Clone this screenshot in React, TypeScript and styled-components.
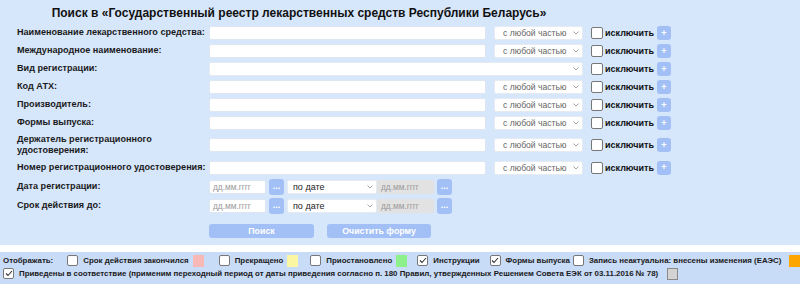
import React from "react";
import styled, { createGlobalStyle } from "styled-components";

const Global = createGlobalStyle`
  html, body { margin: 0; padding: 0; background: #ffffff; }
  body { font-family: "Liberation Sans", Arial, sans-serif; }
`;

const Page = styled.div`
  width: 800px;
  height: 284px;
  display: flex;
  flex-direction: column;
  background: #ffffff;
  overflow: hidden;
`;

const Panel = styled.div`
  height: 245px;
  background: #d6e6fb;
  display: flex;
  flex-direction: column;
  padding-left: 17px;
  box-sizing: border-box;
`;

const Title = styled.h1`
  margin: 0;
  width: 564px;
  height: 24px;
  line-height: 26px;
  font-size: 12px;
  font-weight: bold;
  text-align: center;
  color: #111;
`;

const Row = styled.div<{ $h?: number }>`
  display: flex;
  align-items: center;
  height: ${(p) => p.$h ?? 18}px;
`;

const Label = styled.div`
  width: 192px;
  flex: none;
  font-size: 9.1px;
  font-weight: bold;
  line-height: 11.5px;
  color: #1a1a1a;
`;

const TextInput = styled.div<{ $w: number; $disabled?: boolean; $h?: number }>`
  width: ${(p) => p.$w}px;
  height: ${(p) => p.$h ?? 14}px;
  box-sizing: border-box;
  background: ${(p) => (p.$disabled ? "#e2e2e2" : "#ffffff")};
  border: 1px solid ${(p) => (p.$disabled ? "#e2e2e2" : "#dfe6ef")};
  border-radius: 2px;
  font-size: 8.3px;
  color: #9a9a9a;
  padding-left: 3px;
  display: flex;
  align-items: center;
  flex: none;
`;

const Select = styled.div<{ $w: number; $h?: number; $dark?: boolean }>`
  width: ${(p) => p.$w}px;
  height: ${(p) => p.$h ?? 14}px;
  box-sizing: border-box;
  background: #ffffff;
  border-radius: 2px;
  border: 1px solid #e6ebf2;
  font-size: ${(p) => (p.$dark ? 9 : 8.6)}px;
  color: ${(p) => (p.$dark ? "#222" : "#666")};
  padding: 0 3px 0 ${(p) => (p.$dark ? 5 : 8)}px;
  display: flex;
  align-items: center;
  justify-content: space-between;
  flex: none;
`;

const Chevron = () => (
  <svg width="6" height="4" viewBox="0 0 6 4">
    <path d="M0.5 0.5 L3 3 L5.5 0.5" fill="none" stroke="#9a9a9a" strokeWidth="0.9" />
  </svg>
);

const Box = styled.span<{ $size?: number }>`
  width: ${(p) => p.$size ?? 12}px;
  height: ${(p) => p.$size ?? 12}px;
  box-sizing: border-box;
  border: 1px solid #777;
  border-radius: 2px;
  background: #fff;
  display: inline-flex;
  align-items: center;
  justify-content: center;
  flex: none;
`;

const Check = () => (
  <svg width="8" height="7" viewBox="0 0 8 7">
    <path d="M1 3.5 L3 5.5 L7 1" fill="none" stroke="#333" strokeWidth="1.1" />
  </svg>
);

const Exclude = styled.div`
  display: flex;
  align-items: center;
  margin-left: 8px;
`;

const ExcludeText = styled.span`
  font-size: 9px;
  font-weight: bold;
  color: #111;
  margin-left: 2px;
`;

const BlueBtn = styled.span<{ $w?: number; $h?: number }>`
  width: ${(p) => p.$w ?? 14}px;
  height: ${(p) => p.$h ?? 14}px;
  background: #a3c0f6;
  border-radius: 3px;
  color: #fff;
  font-size: 9px;
  font-weight: bold;
  display: inline-flex;
  align-items: center;
  justify-content: center;
  flex: none;
  line-height: 1;
`;

const Gap = styled.span<{ $w: number }>`
  width: ${(p) => p.$w}px;
  flex: none;
`;

const Actions = styled.div`
  display: flex;
  margin-top: 9px;
  margin-left: 192px;
  gap: 13px;
`;

const ActionBtn = styled.span<{ $w: number }>`
  width: ${(p) => p.$w}px;
  height: 14px;
  background: #a3c0f6;
  border-radius: 3px;
  color: #fff;
  font-size: 8.8px;
  font-weight: bold;
  display: flex;
  align-items: center;
  justify-content: center;
`;

const Strip = styled.div`
  height: 7px;
  background: #ffffff;
`;

const Footer = styled.div`
  flex: 1;
  background: #c8dbf7;
  padding: 2px 0 0 3px;
  box-sizing: border-box;
  font-size: 7.9px;
  font-weight: bold;
  color: #1a1a1a;
`;

const FooterLine = styled.div`
  display: flex;
  align-items: center;
  height: 13px;
  white-space: nowrap;
`;

const FooterItem = styled.span<{ $ml?: number }>`
  display: inline-flex;
  align-items: center;
  margin-left: ${(p) => p.$ml ?? 0}px;
  gap: 5px;
`;

const Swatch = styled.span<{ $c: string; $border?: string; $ml?: number }>`
  width: 11px;
  height: 12px;
  background: ${(p) => p.$c};
  border: ${(p) => (p.$border ? `1px solid ${p.$border}` : "none")};
  box-sizing: border-box;
  margin-left: ${(p) => p.$ml ?? -1}px;
  flex: none;
`;

const textRows: { label: React.ReactNode; h?: number; full?: boolean }[] = [
  { label: "Наименование лекарственного средства:" },
  { label: "Международное наименование:" },
  { label: "Вид регистрации:", full: true },
  { label: "Код АТХ:" },
  { label: "Производитель:" },
  { label: "Формы выпуска:" },
  {
    label: (
      <>
        Держатель регистрационного
        <br />
        удостоверения:
      </>
    ),
    h: 26,
  },
  { label: "Номер регистрационного удостоверения:", h: 19 },
];

const FilterRow = ({ label, h, full }: { label: React.ReactNode; h?: number; full?: boolean }) => (
  <Row $h={h}>
    <Label>{label}</Label>
    {full ? (
      <Select $w={374}>
        <span />
        <Chevron />
      </Select>
    ) : (
      <>
        <TextInput $w={277} />
        <Gap $w={8} />
        <Select $w={89}>
          <span>с любой частью</span>
          <Chevron />
        </Select>
      </>
    )}
    <Exclude>
      <Box />
      <ExcludeText>исключить</ExcludeText>
      <Gap $w={3} />
      <BlueBtn>+</BlueBtn>
    </Exclude>
  </Row>
);

const DateRow = ({ label }: { label: string }) => (
  <Row $h={19}>
    <Label>{label}</Label>
    <TextInput $w={57} $h={14}>дд.мм.гггг</TextInput>
    <Gap $w={3} />
    <BlueBtn $w={15} $h={16}>...</BlueBtn>
    <Gap $w={3} />
    <Select $w={90} $dark>
      <span>по дате</span>
      <Chevron />
    </Select>
    <TextInput $w={57} $disabled>дд.мм.гггг</TextInput>
    <Gap $w={3} />
    <BlueBtn $w={15} $h={16}>...</BlueBtn>
  </Row>
);

export default function App() {
  return (
    <Page>
      <Global />
      <Panel>
        <Title>Поиск в «Государственный реестр лекарственных средств Республики Беларусь»</Title>
        {textRows.map((r, i) => (
          <FilterRow key={i} {...r} />
        ))}
        <DateRow label="Дата регистрации:" />
        <DateRow label="Срок действия до:" />
        <Actions>
          <ActionBtn $w={105}>Поиск</ActionBtn>
          <ActionBtn $w={104}>Очистить форму</ActionBtn>
        </Actions>
      </Panel>
      <Strip />
      <Footer>
        <FooterLine>
          <FooterItem>Отображать:</FooterItem>
          <FooterItem $ml={14}>
            <Box $size={11} />
            Срок действия закончился
            <Swatch $c="#f8b8b8" />
          </FooterItem>
          <FooterItem $ml={15}>
            <Box $size={11} />
            Прекращено
            <Swatch $c="#fbf6a2" />
          </FooterItem>
          <FooterItem $ml={12}>
            <Box $size={11} />
            Приостановлено
            <Swatch $c="#8ef08a" />
          </FooterItem>
          <FooterItem $ml={10}>
            <Box $size={11}>
              <Check />
            </Box>
            Инструкции
          </FooterItem>
          <FooterItem $ml={10}>
            <Box $size={11}>
              <Check />
            </Box>
            Формы выпуска
          </FooterItem>
          <FooterItem $ml={3}>
            <Box $size={11} />
            Запись неактуальна: внесены изменения (ЕАЭС)
            <Swatch $c="#ffa500" $ml={3} />
          </FooterItem>
        </FooterLine>
        <FooterLine>
          <FooterItem>
            <Box $size={11}>
              <Check />
            </Box>
            Приведены в соответствие (применим переходный период от даты приведения согласно п. 180 Правил,
            утвержденных Решением Совета ЕЭК от 03.11.2016 № 78)
            <Swatch $c="#d3d3d3" $border="#8a8a8a" $ml={4} />
          </FooterItem>
        </FooterLine>
      </Footer>
    </Page>
  );
}
